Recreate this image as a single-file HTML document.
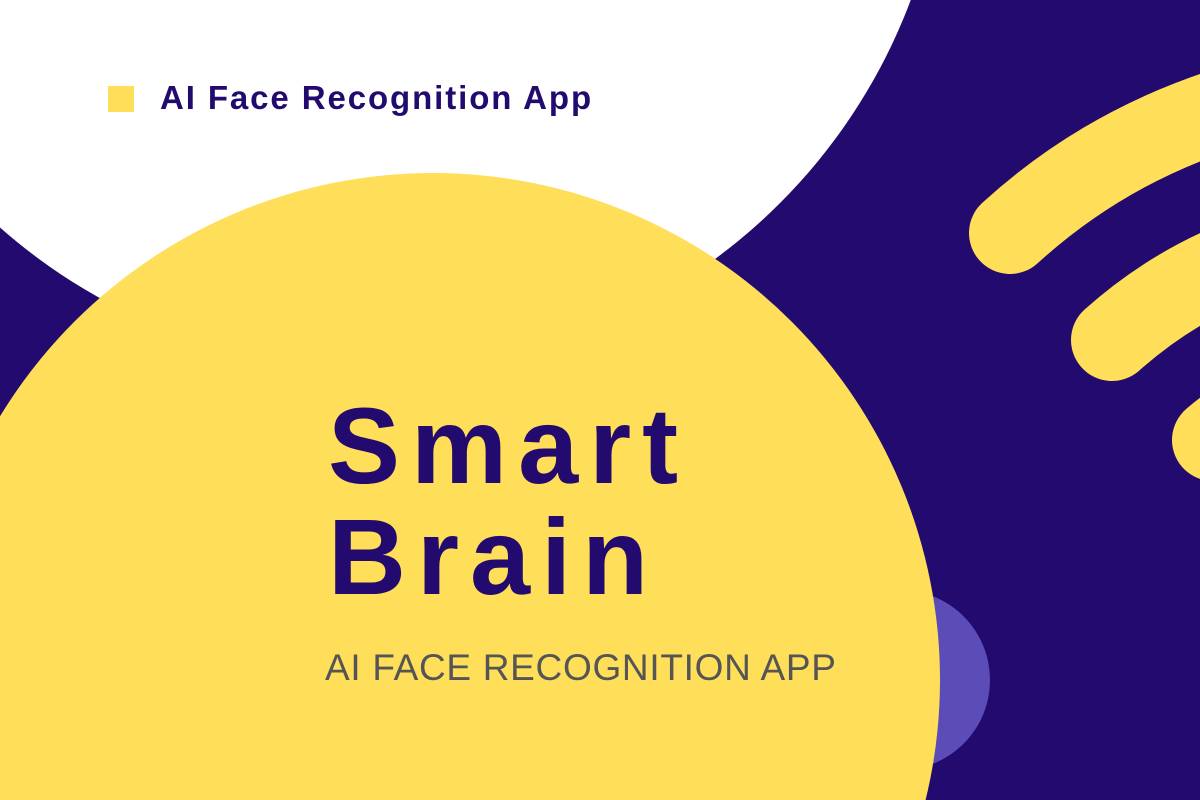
<!DOCTYPE html>
<html><head><meta charset="utf-8"><style>
html,body{margin:0;padding:0;overflow:hidden}
body{width:1200px;height:800px;overflow:hidden;position:relative;background:#230a6e;font-family:"Liberation Sans",sans-serif}
svg{position:absolute;left:0;top:0}
.t{position:absolute;color:#230a6e;font-weight:bold;white-space:nowrap}
</style></head><body>
<svg width="1200" height="800" viewBox="0 0 1200 800">
<circle cx="377" cy="-200" r="570" fill="#ffffff"/>
<circle cx="900" cy="680" r="90" fill="#5b4cb8"/>
<circle cx="433" cy="680" r="507" fill="#ffde59"/>
<g fill="none" stroke="#ffde59" stroke-width="82" stroke-linecap="round">
<path d="M1010 233 A578 578 0 0 1 1400 82"/>
<path d="M1112 340 A430 430 0 0 1 1400 230"/>
<path d="M1213 440 A289 289 0 0 1 1400 371"/>
</g>
<rect x="108" y="86" width="26" height="26" fill="#ffde59"/>
</svg>
<div class="t" style="left:160px;top:80px;font-size:33px;line-height:36px;letter-spacing:1.9px">AI Face Recognition App</div>
<div class="t" style="left:328px;top:390px;font-size:108px;line-height:111px;letter-spacing:11px">Smart<br>Brain</div>
<div class="t" style="left:325px;top:647px;font-size:37px;line-height:42px;font-weight:normal;color:#555555;letter-spacing:0.7px">AI FACE RECOGNITION APP</div>
</body></html>
